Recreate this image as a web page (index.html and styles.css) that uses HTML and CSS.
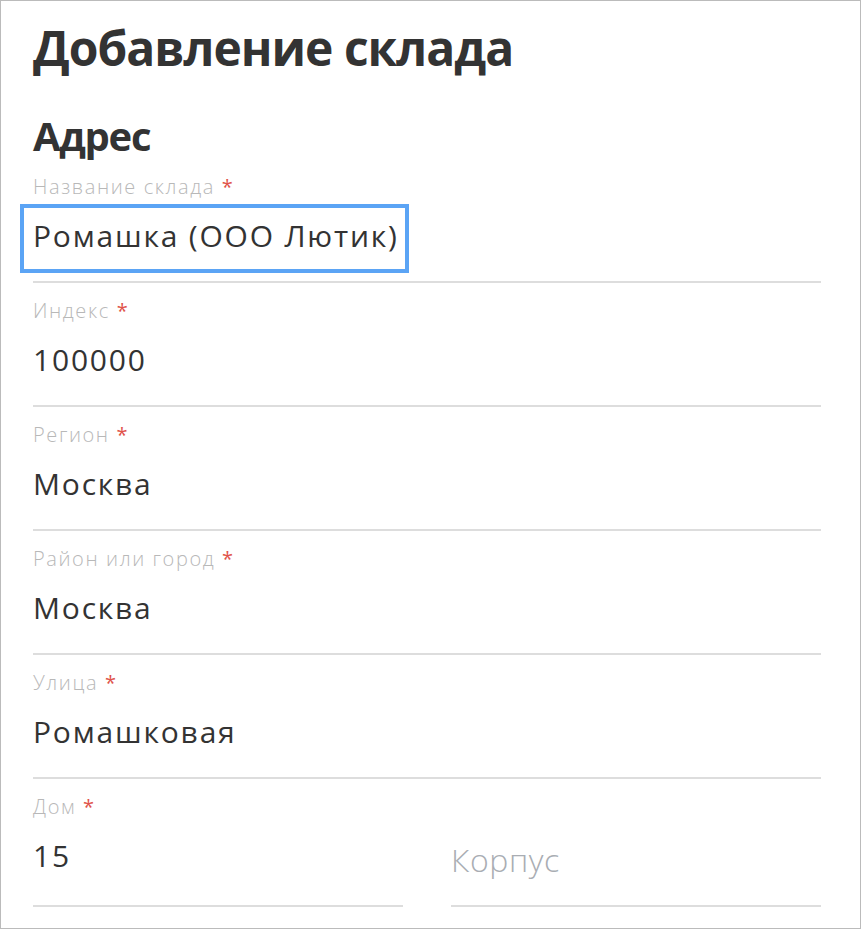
FILE: index.html
```html
<!DOCTYPE html>
<html lang="ru">
<head>
<meta charset="utf-8">
<title>Добавление склада</title>
<link rel="stylesheet" href="styles.css">
</head>
<body>
<div class="frame">
  <h1 class="title">Добавление склада</h1>
  <h2 class="section">Адрес</h2>
  <div class="field">
    <div class="label">Название склада <span class="req">*</span></div>
    <div class="value focused"><span class="ring"></span>Ромашка (ООО Лютик)</div>
  </div>
  <div class="field">
    <div class="label">Индекс <span class="req">*</span></div>
    <div class="value">100000</div>
  </div>
  <div class="field">
    <div class="label">Регион <span class="req">*</span></div>
    <div class="value">Москва</div>
  </div>
  <div class="field">
    <div class="label">Район или город <span class="req">*</span></div>
    <div class="value">Москва</div>
  </div>
  <div class="field">
    <div class="label">Улица <span class="req">*</span></div>
    <div class="value">Ромашковая</div>
  </div>
  <div class="row">
    <div class="field">
      <div class="label">Дом <span class="req">*</span></div>
      <div class="value">15</div>
    </div>
    <div class="field">
      <div class="label"></div>
      <div class="value placeholder">Корпус</div>
    </div>
  </div>
</div>
</body>
</html>
```
FILE: styles.css
```css
html, body {
  margin: 0;
  padding: 0;
  background: #fff;
}
.frame {
  box-sizing: border-box;
  width: 861px;
  height: 929px;
  border: 1px solid #bbbbbb;
  padding: 0 39px 0 32px;
  font-family: "Open Sans", "Noto Sans", sans-serif;
  color: #333333;
  overflow: hidden;
}
.title {
  margin: 19px 0 0;
  font-size: 48px;
  line-height: 56px;
  font-weight: 700;
  letter-spacing: -1px;
}
.section {
  margin: 37px 0 0;
  font-size: 40px;
  line-height: 46px;
  font-weight: 700;
  letter-spacing: -1.3px;
}
.field {
  padding: 16px 0 25px;
  border-bottom: 2px solid #dddddd;
}
.label {
  height: 24px;
  font-size: 20px;
  line-height: 24px;
  font-weight: 300;
  letter-spacing: 1.6px;
  color: #b8b8b8;
}
.req {
  color: #e0534a;
  font-weight: 400;
  letter-spacing: 0;
}
.value {
  position: relative;
  margin-top: 17px;
  height: 40px;
  font-size: 30px;
  line-height: 40px;
  font-weight: 400;
  letter-spacing: 1.8px;
  color: #333333;
  white-space: nowrap;
}
.focused .ring {
  position: absolute;
  left: -13px;
  top: -12px;
  width: 389px;
  height: 69px;
  box-sizing: border-box;
  border: 4px solid #5ba4f5;
}
.row {
  display: grid;
  grid-template-columns: 1fr 1fr;
  column-gap: 48px;
}
.placeholder {
  font-size: 32px;
  font-weight: 300;
  letter-spacing: 0.6px;
  color: #a9adb3;
  padding-top: 4px;
}
```
